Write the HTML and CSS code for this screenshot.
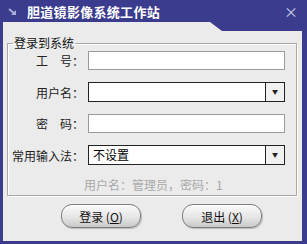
FILE: index.html
```html
<!DOCTYPE html>
<html lang="zh-CN">
<head>
    <meta charset="UTF-8">
    <title>胆道镜影像系统工作站</title>
    <link rel="stylesheet" href="styles.css">
</head>
<body>
    <div class="window">
        <div class="titlebar">
            <svg class="app-icon" width="9" height="8" viewBox="0 0 9 8">
                <path d="M1 1 L7 6" stroke="#a9b0dc" stroke-width="2"/>
                <path d="M8 2 L8 7 L3 7 Z" fill="#a9b0dc"/>
            </svg>
            <span class="title">胆道镜影像系统工作站</span>
            <span class="close">×</span>
        </div>
        <div class="panel">
            <fieldset class="group">
                <legend>登录到系统</legend>
                <div class="form">
                    <label>工　号：</label>
                    <div class="field"></div>
                    <label>用户名：</label>
                    <div class="field combo"><span class="value"></span><span class="drop">▼</span></div>
                    <label>密　码：</label>
                    <div class="field"></div>
                    <label>常用输入法：</label>
                    <div class="field combo"><span class="value">不设置</span><span class="drop">▼</span></div>
                </div>
                <div class="hint">用户名：管理员，密码：1</div>
            </fieldset>
            <div class="buttons">
                <button class="btn">登录 (<u>O</u>)</button>
                <button class="btn">退出 (<u>X</u>)</button>
            </div>
        </div>
    </div>
</body>
</html>
```

FILE: styles.css
```css
body {
    margin: 0;
    font-family: "Noto Sans CJK SC", "DejaVu Sans", sans-serif;
    font-size: 12px;
    background: #3b3c8e;
}
.window {
    width: 307px;
    height: 244px;
    box-sizing: border-box;
    background: #3b3c8e;
    padding: 0 5px 3px 3px;
    display: flex;
    flex-direction: column;
}
.titlebar {
    height: 22px;
    display: flex;
    align-items: center;
    color: white;
}
.app-icon {
    margin: 1px 0 0 5px;
}
.title {
    margin-left: 10px;
    font-size: 13px;
    font-weight: 700;
    font-style: normal;
    letter-spacing: 0.3px;
}
.close {
    margin-left: auto;
    margin-right: 4px;
    font-size: 14px;
    color: #c9cbe6;
}
.panel {
    flex: 1;
    background: #ebebeb;
    padding: 14px 5px 0 4px;
    clip-path: polygon(0 0, 207px 0, 219px 9px, 100% 9px, 100% 100%, 0 100%);
}
.group {
    margin: 0;
    padding: 0 11px 4px 0;
    border: 1px solid #a9a9a9;
    box-shadow: inset 1px 1px 0 #fff, 1px 1px 0 #fff;
    height: 160px;
    box-sizing: border-box;
}
.group legend {
    margin-left: 5px;
    padding: 0 1px;
    line-height: 14px;
    color: #111;
}
.form {
    display: grid;
    grid-template-columns: 76px 1fr;
    column-gap: 4px;
    row-gap: 12px;
    margin-top: 1px;
    align-items: center;
}
.form label {
    text-align: right;
    color: #222;
    white-space: nowrap;
}
.field {
    height: 17px;
    background: white;
    border: 1px solid #9a9a9a;
    display: flex;
}
.field.combo {
    height: 18px;
    border-color: #222;
}
.value {
    flex: 1;
    padding-left: 4px;
    line-height: 18px;
    color: #000;
}
.drop {
    width: 18px;
    border-left: 1px solid #222;
    background: #f1f1f1;
    font-size: 6px;
    line-height: 18px;
    text-align: center;
    color: #222;
}
.hint {
    margin: 13px 0 0 76px;
    color: #a9a9a9;
    line-height: 14px;
}
.buttons {
    display: flex;
    gap: 41px;
    padding: 8px 0 0 54px;
}
.btn {
    width: 80px;
    height: 24px;
    border: 1px solid #7c7c7c;
    border-radius: 11px;
    background: linear-gradient(#fafafa, #e6e6e6 55%, #c9c9c9);
    box-shadow: inset 0 1px 1px #fff, 1px 1px 1px rgba(0,0,0,0.2);
    font-family: "Noto Sans CJK SC", "DejaVu Sans", sans-serif;
    font-size: 12px;
    color: #111;
    padding: 0;
}
.btn u {
    text-decoration: underline;
}
```
